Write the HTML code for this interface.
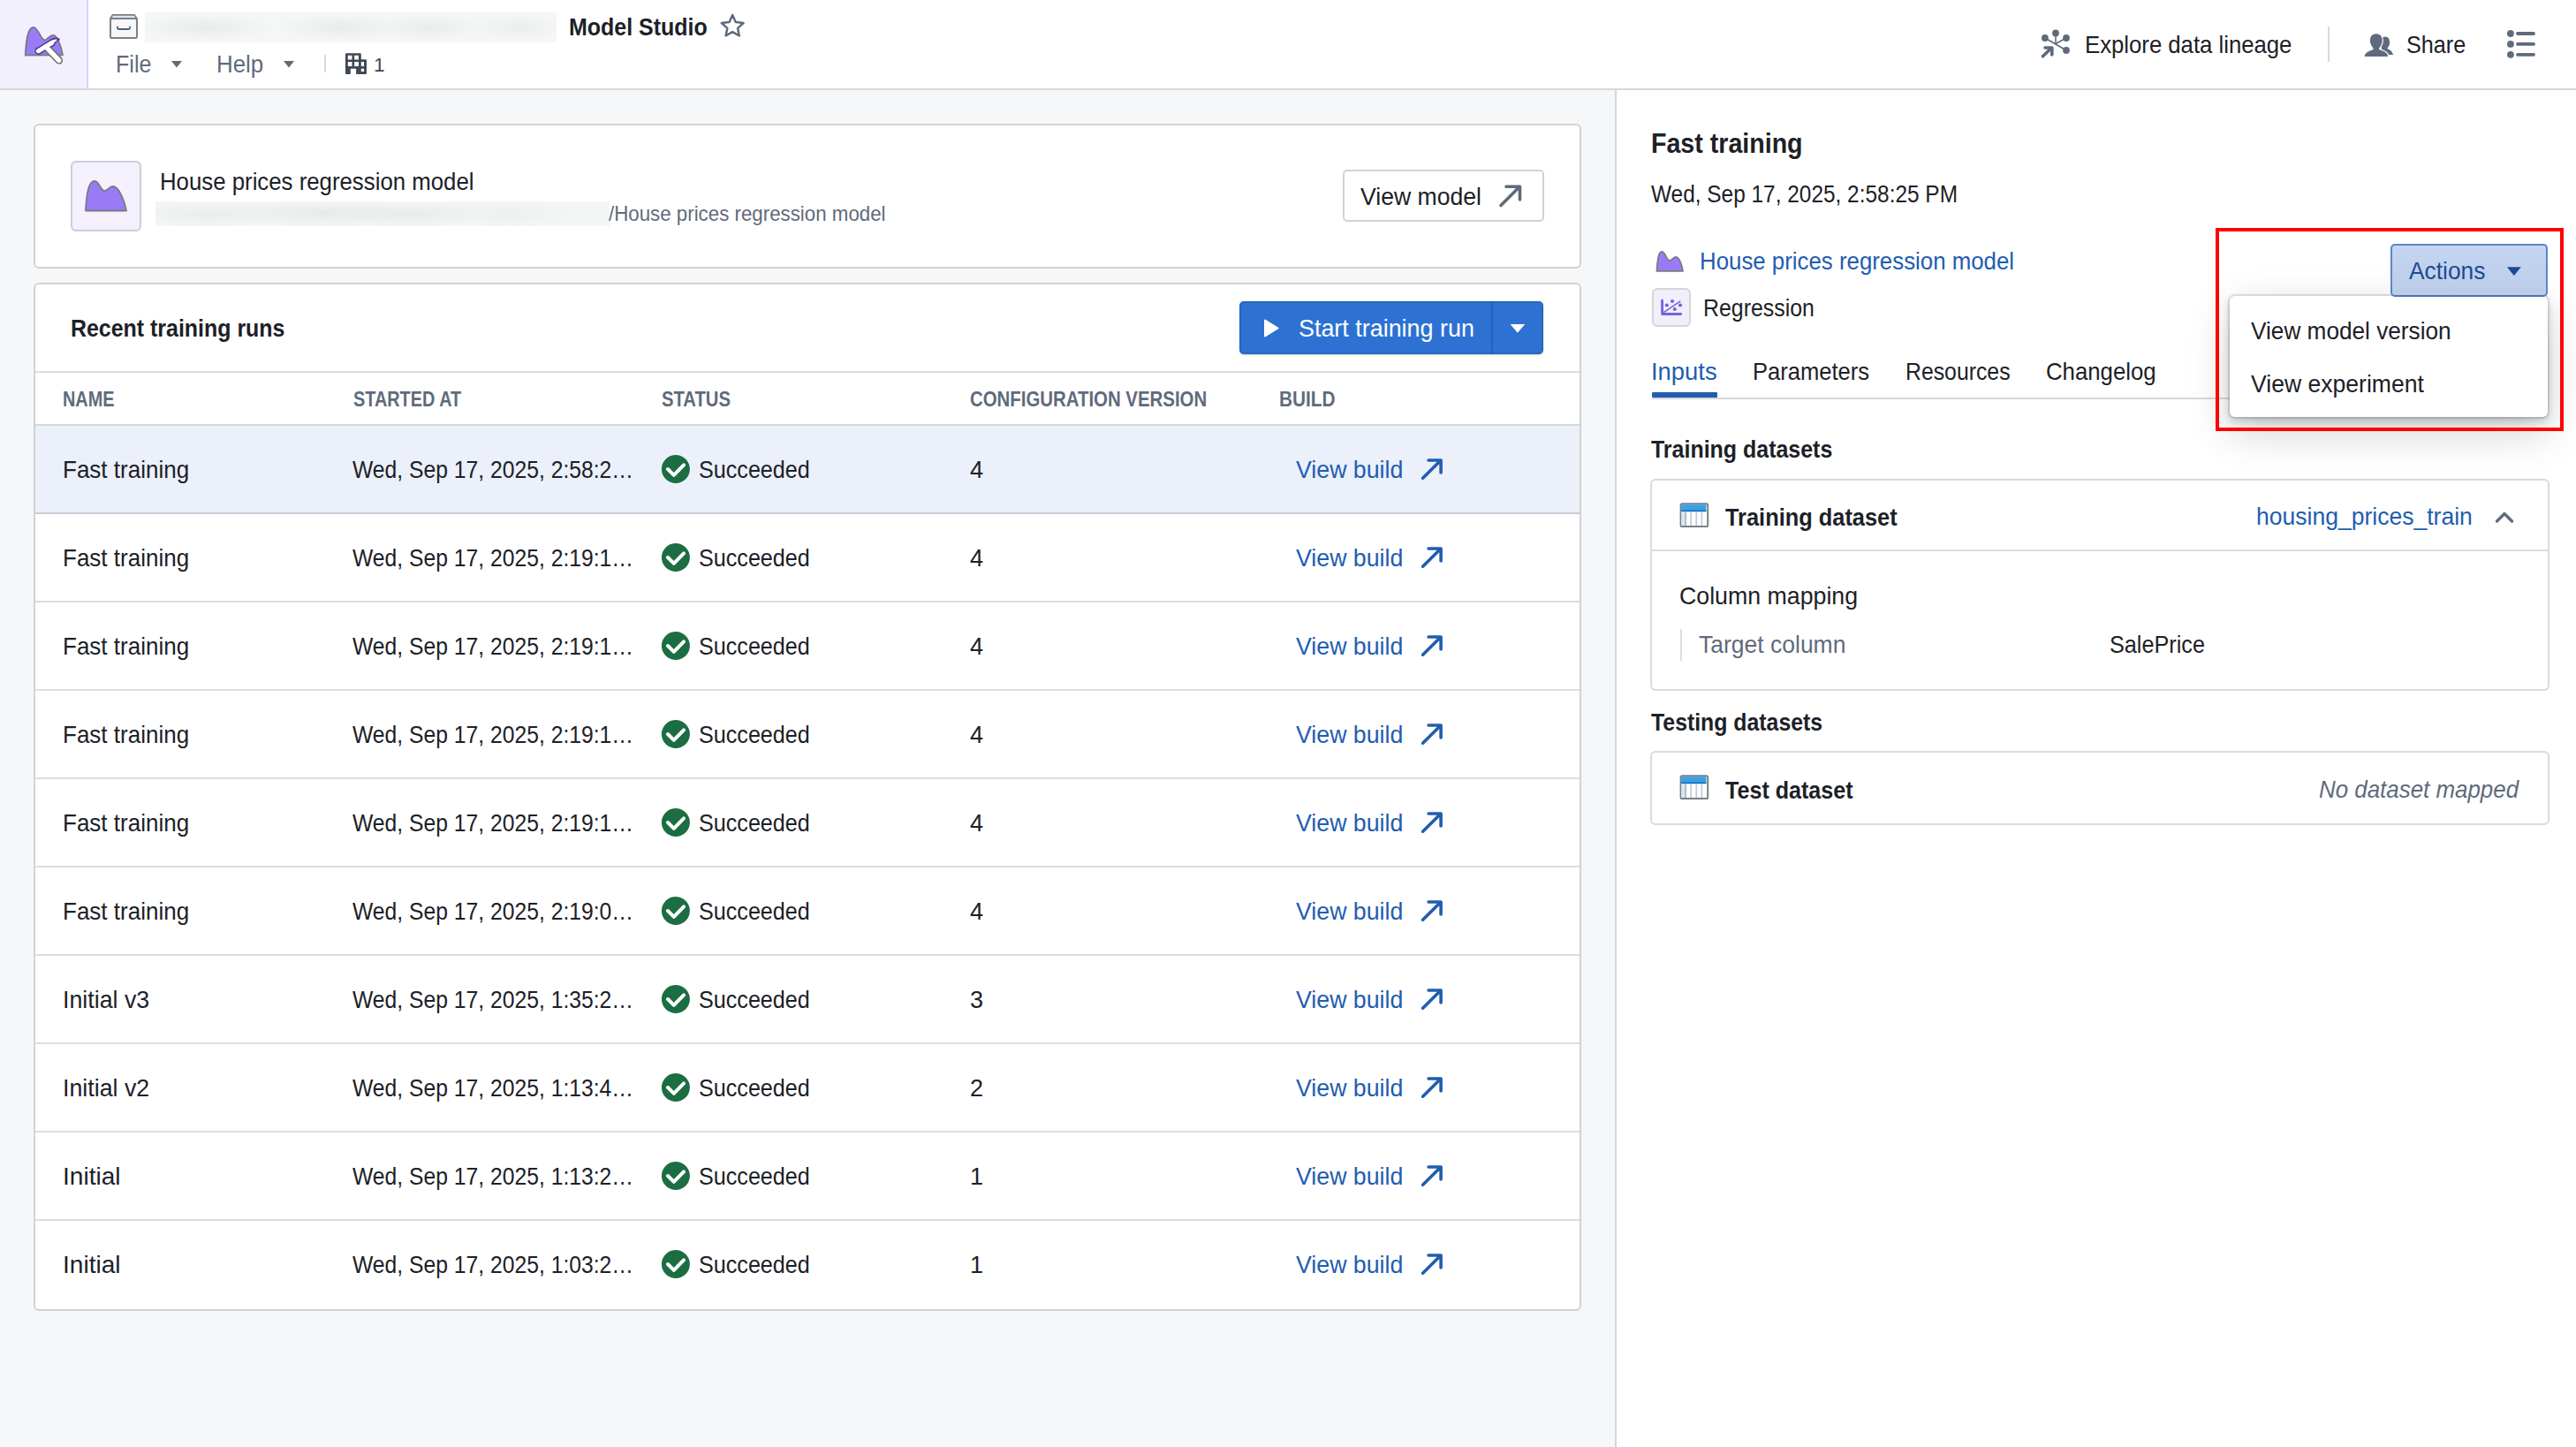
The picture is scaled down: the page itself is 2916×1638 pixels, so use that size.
<!DOCTYPE html>
<html><head><meta charset="utf-8"><title>Model Studio</title>
<style>
html,body{margin:0;padding:0;}
body{width:2916px;height:1638px;overflow:hidden;position:relative;background:#fff;font-family:"Liberation Sans",sans-serif;color:#1C2127;}
.box,.t,.ic,.card,.btn,.blur{position:absolute;box-sizing:content-box;}
.t{white-space:nowrap;line-height:1;transform-origin:0 0;}
.card{background:#fff;border:2px solid #D1D2D4;border-radius:6px;}
.btn{background:#fff;border:2px solid #D1D2D4;border-radius:5px;}
.blur{background:linear-gradient(90deg,#F3F4F5 0%,#EBECED 12%,#F1F2F3 22%,#E9EAEB 32%,#EEEFF0 45%,#E8E9EA 58%,#F0F1F2 70%,#E9EAEB 82%,#F3F4F5 100%);}
</style></head><body>
<div class="box" style="left:0;top:0;width:2916px;height:100px;background:#fff"></div>
<div class="box" style="left:0;top:100px;width:2916px;height:2px;background:#D3D8DE"></div>
<div class="box" style="left:0;top:0;width:98px;height:100px;background:#F3F0FE"></div>
<div class="box" style="left:98px;top:0;width:2px;height:100px;background:#DCD0FB"></div>
<svg class="ic" style="left:20px;top:20px" width="60" height="60" viewBox="20 20 60 60">
<path d="M28.7 62.6 C29.5 48 31 31 37.8 30.8 C43 30.8 46 45 50.3 45.3 C53.5 45.3 56 39.8 60.2 39.9 C65.5 40 70 56 71 62.3 Z" fill="#9A7BF7" stroke="#7A7A7E" stroke-width="1.8" stroke-linejoin="round"/>
<g stroke-linecap="round" stroke-linejoin="round">
<line x1="52.5" y1="53.5" x2="66.8" y2="68.3" stroke="#6F6F74" stroke-width="8.6"/>
<path d="M41.2 59.3 C40 57.5 40.5 55.8 42.5 55 L58 45.5 C61 44 64.5 43.5 66.4 44.6 C63.5 46 61.5 48 61 50.5 L57.5 52.5 L46 59.5 C44.5 61 42.5 61 41.2 59.3 Z" fill="#4B3A8C" stroke="#4B3A8C" stroke-width="2.6"/>
<line x1="52.5" y1="53.5" x2="66.8" y2="68.3" stroke="#fff" stroke-width="5.4"/>
<path d="M41.6 58.6 C40.9 57.6 41.3 56.5 42.6 56 L58 46.6 C60.5 45.2 62.5 44.9 64 45.2 C61.5 46.8 60.2 48.5 59.8 50.3 L57.2 51.8 L45.6 58.8 C44.3 59.9 42.6 59.9 41.6 58.6 Z" fill="#fff" stroke="#fff" stroke-width="1.2"/>
</g>
</svg>
<svg class="ic" style="left:118px;top:10px" width="50" height="40" viewBox="118 10 50 40">
<path d="M127.5 16.8 L152 16.8 L155 21 L125 21 Z" fill="#DCE7F2" stroke="#7C8085" stroke-width="1.8" stroke-linejoin="round"/>
<rect x="125" y="21" width="30" height="22" rx="1.8" fill="#F6F7F9" stroke="#7C8085" stroke-width="2"/>
<path d="M133 30.5 L133 31.5 Q133 33 134.5 33 L145.5 33 Q147 33 147 31.5 L147 30.5" fill="none" stroke="#4A6076" stroke-width="1.8" stroke-linecap="round"/>
</svg>
<div class="blur" style="left:164px;top:14px;width:466px;height:34px;background:radial-gradient(ellipse 75px 15px at 70px 17px,#E9EAEB,rgba(245,246,246,0)),radial-gradient(ellipse 70px 15px at 222px 17px,#E9EAEB,rgba(245,246,246,0)),radial-gradient(ellipse 60px 15px at 322px 17px,#EAEBEC,rgba(245,246,246,0)),radial-gradient(ellipse 55px 15px at 424px 17px,#ECEDEE,rgba(245,246,246,0)),#F5F6F6"></div>
<div class="t" style="left:643.7px;top:18.4px;font-size:27.03px;transform:scaleX(0.9245);color:#1C2127;font-weight:700;">Model Studio</div>
<svg class="ic" style="left:805px;top:5px" width="50" height="50" viewBox="805 5 50 50">
<path d="M829.2 17.0 L832.8 25.0 L841.6 26.0 L835.1 31.9 L836.8 40.5 L829.2 36.2 L821.6 40.5 L823.3 31.9 L816.8 26.0 L825.6 25.0 Z" fill="none" stroke="#5F6B7C" stroke-width="2.5" stroke-linejoin="round"/>
</svg>
<div class="t" style="left:130.8px;top:60.4px;font-size:27.03px;transform:scaleX(0.9283);color:#5F6B7C;">File</div>
<svg class="ic" style="left:190px;top:65px" width="20" height="15" viewBox="190 65 20 15"><path d="M194 69 L206 69 L200 76.5 Z" fill="#5F6B7C"/></svg>
<div class="t" style="left:244.5px;top:60.4px;font-size:27.03px;transform:scaleX(0.9578);color:#5F6B7C;">Help</div>
<svg class="ic" style="left:317px;top:65px" width="20" height="15" viewBox="317 65 20 15"><path d="M321 69 L333 69 L327 76.5 Z" fill="#5F6B7C"/></svg>
<div class="box" style="left:367px;top:62px;width:2px;height:20px;background:#D6D9DD"></div>
<svg class="ic" style="left:388px;top:58px" width="30" height="28" viewBox="388 58 30 28">
<path fill="#404854" fill-rule="evenodd" d="M392.2 60.2 L407.6 60.2 Q408.8 60.2 408.8 61.4 L408.8 67.3 L413.8 67.3 Q415 67.3 415 68.5 L415 82.7 Q415 83.9 413.8 83.9 L403.1 83.9 L403.1 77.7 L396.8 77.7 L396.8 83.9 L392.2 83.9 Q391 83.9 391 82.7 L391 61.4 Q391 60.2 392.2 60.2 Z
M393.8 62.7 L398.5 62.7 L398.5 67.6 L393.8 67.6 Z M401.1 62.7 L406 62.7 L406 67.6 L401.1 67.6 Z
M393.8 70.1 L398.5 70.1 L398.5 75 L393.8 75 Z M401.1 70.1 L406 70.1 L406 75 L401.1 75 Z
M408.8 70.1 L412.1 70.1 L412.1 75 L408.8 75 Z M408.8 77.8 L412.1 77.8 L412.1 81 L408.8 81 Z"/>
</svg>
<div class="t" style="left:423.0px;top:62.1px;font-size:22.67px;color:#404854;">1</div>
<svg class="ic" style="left:2300px;top:25px" width="50" height="50" viewBox="2300 25 50 50">
<g fill="#5F6B7C" stroke="#5F6B7C" stroke-linecap="round">
<circle cx="2327" cy="37.4" r="3.9" stroke="none"/><circle cx="2314.9" cy="43" r="3.9" stroke="none"/>
<circle cx="2339" cy="43" r="3.9" stroke="none"/><circle cx="2339" cy="57" r="3.9" stroke="none"/>
<path d="M2327 38 L2327 49.5 M2314.9 43 L2339 57 M2339 43 L2327 49.5" stroke-width="1.6" fill="none"/>
<path d="M2312.4 63.8 L2322.3 54.2 M2315 54 L2322.8 54 L2322.8 62" stroke-width="3.6" fill="none" stroke-linejoin="round"/>
</g></svg>
<div class="t" style="left:2359.6px;top:38.4px;font-size:27.03px;transform:scaleX(0.9517);color:#1C2127;">Explore data lineage</div>
<div class="box" style="left:2635px;top:30px;width:2px;height:40px;background:#D6D9DD"></div>
<svg class="ic" style="left:2670px;top:25px" width="50" height="50" viewBox="2670 25 50 50">
<g fill="#5F6B7C">
<path d="M2700.2 41.6 C2703.4 41.6 2705.1 44.4 2705.1 48 C2705.1 50.8 2703.9 53 2702.6 54.3 L2702.6 55.2 C2705.5 56.3 2708.2 58.3 2708.9 61.6 L2708.9 62 L2696 62 L2696 54.5 C2695 53 2694.4 50.5 2694.4 48 C2694.4 44.4 2697 41.6 2700.2 41.6 Z"/>
<path d="M2689.8 38.3 C2694.6 38.3 2696.7 42 2696.7 45.6 C2696.7 49.6 2694.9 52.6 2693.1 54.5 L2693.1 55.9 C2696.2 57 2701.2 58.6 2702.7 61.6 L2703 63.9 L2676.6 63.9 L2677.3 61.6 C2678.8 58.6 2683.6 57 2686.5 55.9 L2686.5 54.5 C2684.7 52.6 2682.9 49.6 2682.9 45.6 C2682.9 42 2685 38.3 2689.8 38.3 Z" stroke="#fff" stroke-width="2.4" paint-order="stroke"/>
</g></svg>
<div class="t" style="left:2724.0px;top:38.4px;font-size:27.03px;transform:scaleX(0.9311);color:#1C2127;">Share</div>
<svg class="ic" style="left:2830px;top:25px" width="50" height="50" viewBox="2830 25 50 50">
<g fill="#5F6B7C"><circle cx="2841.9" cy="38" r="3.9"/><circle cx="2841.9" cy="49.9" r="3.9"/><circle cx="2841.9" cy="61.8" r="3.9"/></g>
<path d="M2850 38 L2868 38 M2850 49.9 L2868 49.9 M2850 61.8 L2868 61.8" stroke="#5F6B7C" stroke-width="3.8" stroke-linecap="round"/>
</svg>
<div class="box" style="left:0;top:102px;width:1828px;height:1536px;background:#F6F7F9"></div>
<div class="box" style="left:1828px;top:102px;width:2px;height:1536px;background:#D5D7DA"></div>
<div class="box" style="left:1830px;top:102px;width:1086px;height:1536px;background:#fff"></div>
<div class="card" style="left:38px;top:140px;width:1748px;height:160px"></div>
<div class="box" style="left:80px;top:182px;width:76px;height:76px;background:#F4F0FE;border:2px solid #CFCCDA;border-radius:6px"></div>
<svg class="ic" style="left:90px;top:198px" width="60" height="48" viewBox="90 198 60 48">
<path d="M97 238.5 C97.5 226 99 205 107 205 C112.5 205 113.5 216 118.5 216 C122.5 216 123.5 211 127.5 211 C134 211 140 224 143 238.5 Z" fill="#9A7BF7" stroke="#7A7A7E" stroke-width="1.8" stroke-linejoin="round"/>
</svg>
<div class="t" style="left:180.5px;top:193.4px;font-size:27.03px;transform:scaleX(0.9546);color:#1C2127;">House prices regression model</div>
<div class="blur" style="left:176px;top:228px;width:514px;height:28px;background:radial-gradient(ellipse 90px 14px at 60px 14px,#EBECED,rgba(245,246,246,0)),radial-gradient(ellipse 110px 15px at 190px 13px,#E8E9EA,rgba(245,246,246,0)),radial-gradient(ellipse 90px 14px at 290px 14px,#EAEBEC,rgba(245,246,246,0)),radial-gradient(ellipse 80px 14px at 400px 14px,#EEEFF0,rgba(245,246,246,0)),#F4F5F5"></div>
<div class="t" style="left:688.6px;top:230.4px;font-size:24.71px;transform:scaleX(0.9026);color:#5F6B7C;">/House prices regression model</div>
<div class="btn" style="left:1520px;top:192px;width:224px;height:55px"></div>
<div class="t" style="left:1540.0px;top:210.4px;font-size:27.03px;transform:scaleX(0.9842);color:#1C2127;">View model</div>
<svg class="ic" style="left:1690px;top:203px" width="40" height="40" viewBox="1690 203 40 40">
<path d="M1699 232.5 L1720 211.5 M1705 211.2 L1720.5 211.2 L1720.5 226" fill="none" stroke="#5F6B7C" stroke-width="3.6" stroke-linecap="round" stroke-linejoin="round"/>
</svg>
<div class="card" style="left:38px;top:320px;width:1748px;height:1160px"></div>
<div class="t" style="left:80.0px;top:359.4px;font-size:27.03px;transform:scaleX(0.9229);color:#1C2127;font-weight:700;">Recent training runs</div>
<div class="box" style="left:40px;top:420px;width:1748px;height:2px;background:#DCDEE1"></div>
<div class="box" style="left:40px;top:480px;width:1748px;height:2px;background:#D3D6DA"></div>
<div class="box" style="left:1403px;top:341px;width:344px;height:60px;background:#2D72D2;border-radius:5px;box-shadow:inset 0 0 0 2px rgba(17,20,24,.12),0 1px 2px rgba(17,20,24,.2)"></div>
<div class="box" style="left:1688px;top:341px;width:2px;height:60px;background:#215DB0;opacity:.7"></div>
<svg class="ic" style="left:1425px;top:358px" width="30" height="28" viewBox="1425 358 30 28"><path d="M1432 362.5 L1446.5 371.5 L1432 380.5 Z" fill="#fff" stroke="#fff" stroke-width="2" stroke-linejoin="round"/></svg>
<div class="t" style="left:1470.0px;top:359.4px;font-size:27.03px;transform:scaleX(0.9956);color:#fff;">Start training run</div>
<svg class="ic" style="left:1700px;top:360px" width="36" height="24" viewBox="1700 360 36 24"><path d="M1709.6 367 L1726.2 367 L1717.9 376.8 Z" fill="#fff"/></svg>
<div class="t" style="left:70.6px;top:440.7px;font-size:23.11px;transform:scaleX(0.8595);color:#5F6B7C;font-weight:700;">NAME</div>
<div class="t" style="left:399.6px;top:440.7px;font-size:23.11px;transform:scaleX(0.8598);color:#5F6B7C;font-weight:700;">STARTED AT</div>
<div class="t" style="left:748.8px;top:440.7px;font-size:23.11px;transform:scaleX(0.8755);color:#5F6B7C;font-weight:700;">STATUS</div>
<div class="t" style="left:1098.0px;top:440.7px;font-size:23.11px;transform:scaleX(0.8825);color:#5F6B7C;font-weight:700;">CONFIGURATION VERSION</div>
<div class="t" style="left:1447.7px;top:440.7px;font-size:23.11px;transform:scaleX(0.8994);color:#5F6B7C;font-weight:700;">BUILD</div>
<div class="box" style="left:40px;top:482px;width:1748px;height:98px;background:#EBF0FA"></div>
<div class="box" style="left:40px;top:580px;width:1748px;height:2px;background:#C6CCD7"></div>
<div class="t" style="left:70.8px;top:519.4px;font-size:27.03px;transform:scaleX(0.9630);color:#1C2127;">Fast training</div>
<div class="t" style="left:399.0px;top:519.4px;font-size:27.03px;transform:scaleX(0.9140);color:#1C2127;">Wed, Sep 17, 2025, 2:58:2…</div>
<svg class="ic" style="left:745px;top:510.9px" width="40" height="40" viewBox="745 510.9 40 40">
<circle cx="764.9" cy="530.9" r="16" fill="#1C6E42"/>
<path d="M756 530.9 L762.8 537.7 L774 526.3" fill="none" stroke="#fff" stroke-width="4" stroke-linecap="round" stroke-linejoin="round"/>
</svg>
<div class="t" style="left:791.0px;top:519.4px;font-size:27.03px;transform:scaleX(0.9306);color:#1C2127;">Succeeded</div>
<div class="t" style="left:1098.0px;top:519.4px;font-size:27.03px;color:#1C2127;">4</div>
<div class="t" style="left:1466.8px;top:519.4px;font-size:27.03px;transform:scaleX(0.9893);color:#215DB0;">View build</div>
<svg class="ic" style="left:1600px;top:509.9px" width="45" height="42" viewBox="1600 509.9 45 42">
<path d="M1610.6 541.1 L1630 521.9 M1617.1 520.9 L1631.1 520.9 L1631.1 534.9" fill="none" stroke="#215DB0" stroke-width="3.6" stroke-linecap="round" stroke-linejoin="round"/>
</svg>
<div class="box" style="left:40px;top:680px;width:1748px;height:2px;background:#DCDEE1"></div>
<div class="t" style="left:70.8px;top:619.4px;font-size:27.03px;transform:scaleX(0.9630);color:#1C2127;">Fast training</div>
<div class="t" style="left:399.0px;top:619.4px;font-size:27.03px;transform:scaleX(0.9140);color:#1C2127;">Wed, Sep 17, 2025, 2:19:1…</div>
<svg class="ic" style="left:745px;top:610.9px" width="40" height="40" viewBox="745 610.9 40 40">
<circle cx="764.9" cy="630.9" r="16" fill="#1C6E42"/>
<path d="M756 630.9 L762.8 637.7 L774 626.3" fill="none" stroke="#fff" stroke-width="4" stroke-linecap="round" stroke-linejoin="round"/>
</svg>
<div class="t" style="left:791.0px;top:619.4px;font-size:27.03px;transform:scaleX(0.9306);color:#1C2127;">Succeeded</div>
<div class="t" style="left:1098.0px;top:619.4px;font-size:27.03px;color:#1C2127;">4</div>
<div class="t" style="left:1466.8px;top:619.4px;font-size:27.03px;transform:scaleX(0.9893);color:#215DB0;">View build</div>
<svg class="ic" style="left:1600px;top:609.9px" width="45" height="42" viewBox="1600 609.9 45 42">
<path d="M1610.6 641.1 L1630 621.9 M1617.1 620.9 L1631.1 620.9 L1631.1 634.9" fill="none" stroke="#215DB0" stroke-width="3.6" stroke-linecap="round" stroke-linejoin="round"/>
</svg>
<div class="box" style="left:40px;top:780px;width:1748px;height:2px;background:#DCDEE1"></div>
<div class="t" style="left:70.8px;top:719.4px;font-size:27.03px;transform:scaleX(0.9630);color:#1C2127;">Fast training</div>
<div class="t" style="left:399.0px;top:719.4px;font-size:27.03px;transform:scaleX(0.9140);color:#1C2127;">Wed, Sep 17, 2025, 2:19:1…</div>
<svg class="ic" style="left:745px;top:710.9px" width="40" height="40" viewBox="745 710.9 40 40">
<circle cx="764.9" cy="730.9" r="16" fill="#1C6E42"/>
<path d="M756 730.9 L762.8 737.7 L774 726.3" fill="none" stroke="#fff" stroke-width="4" stroke-linecap="round" stroke-linejoin="round"/>
</svg>
<div class="t" style="left:791.0px;top:719.4px;font-size:27.03px;transform:scaleX(0.9306);color:#1C2127;">Succeeded</div>
<div class="t" style="left:1098.0px;top:719.4px;font-size:27.03px;color:#1C2127;">4</div>
<div class="t" style="left:1466.8px;top:719.4px;font-size:27.03px;transform:scaleX(0.9893);color:#215DB0;">View build</div>
<svg class="ic" style="left:1600px;top:709.9px" width="45" height="42" viewBox="1600 709.9 45 42">
<path d="M1610.6 741.1 L1630 721.9 M1617.1 720.9 L1631.1 720.9 L1631.1 734.9" fill="none" stroke="#215DB0" stroke-width="3.6" stroke-linecap="round" stroke-linejoin="round"/>
</svg>
<div class="box" style="left:40px;top:880px;width:1748px;height:2px;background:#DCDEE1"></div>
<div class="t" style="left:70.8px;top:819.4px;font-size:27.03px;transform:scaleX(0.9630);color:#1C2127;">Fast training</div>
<div class="t" style="left:399.0px;top:819.4px;font-size:27.03px;transform:scaleX(0.9140);color:#1C2127;">Wed, Sep 17, 2025, 2:19:1…</div>
<svg class="ic" style="left:745px;top:810.9px" width="40" height="40" viewBox="745 810.9 40 40">
<circle cx="764.9" cy="830.9" r="16" fill="#1C6E42"/>
<path d="M756 830.9 L762.8 837.7 L774 826.3" fill="none" stroke="#fff" stroke-width="4" stroke-linecap="round" stroke-linejoin="round"/>
</svg>
<div class="t" style="left:791.0px;top:819.4px;font-size:27.03px;transform:scaleX(0.9306);color:#1C2127;">Succeeded</div>
<div class="t" style="left:1098.0px;top:819.4px;font-size:27.03px;color:#1C2127;">4</div>
<div class="t" style="left:1466.8px;top:819.4px;font-size:27.03px;transform:scaleX(0.9893);color:#215DB0;">View build</div>
<svg class="ic" style="left:1600px;top:809.9px" width="45" height="42" viewBox="1600 809.9 45 42">
<path d="M1610.6 841.1 L1630 821.9 M1617.1 820.9 L1631.1 820.9 L1631.1 834.9" fill="none" stroke="#215DB0" stroke-width="3.6" stroke-linecap="round" stroke-linejoin="round"/>
</svg>
<div class="box" style="left:40px;top:980px;width:1748px;height:2px;background:#DCDEE1"></div>
<div class="t" style="left:70.8px;top:919.4px;font-size:27.03px;transform:scaleX(0.9630);color:#1C2127;">Fast training</div>
<div class="t" style="left:399.0px;top:919.4px;font-size:27.03px;transform:scaleX(0.9140);color:#1C2127;">Wed, Sep 17, 2025, 2:19:1…</div>
<svg class="ic" style="left:745px;top:910.9px" width="40" height="40" viewBox="745 910.9 40 40">
<circle cx="764.9" cy="930.9" r="16" fill="#1C6E42"/>
<path d="M756 930.9 L762.8 937.7 L774 926.3" fill="none" stroke="#fff" stroke-width="4" stroke-linecap="round" stroke-linejoin="round"/>
</svg>
<div class="t" style="left:791.0px;top:919.4px;font-size:27.03px;transform:scaleX(0.9306);color:#1C2127;">Succeeded</div>
<div class="t" style="left:1098.0px;top:919.4px;font-size:27.03px;color:#1C2127;">4</div>
<div class="t" style="left:1466.8px;top:919.4px;font-size:27.03px;transform:scaleX(0.9893);color:#215DB0;">View build</div>
<svg class="ic" style="left:1600px;top:909.9px" width="45" height="42" viewBox="1600 909.9 45 42">
<path d="M1610.6 941.1 L1630 921.9 M1617.1 920.9 L1631.1 920.9 L1631.1 934.9" fill="none" stroke="#215DB0" stroke-width="3.6" stroke-linecap="round" stroke-linejoin="round"/>
</svg>
<div class="box" style="left:40px;top:1080px;width:1748px;height:2px;background:#DCDEE1"></div>
<div class="t" style="left:70.8px;top:1019.4px;font-size:27.03px;transform:scaleX(0.9630);color:#1C2127;">Fast training</div>
<div class="t" style="left:399.0px;top:1019.4px;font-size:27.03px;transform:scaleX(0.9140);color:#1C2127;">Wed, Sep 17, 2025, 2:19:0…</div>
<svg class="ic" style="left:745px;top:1010.9px" width="40" height="40" viewBox="745 1010.9 40 40">
<circle cx="764.9" cy="1030.9" r="16" fill="#1C6E42"/>
<path d="M756 1030.9 L762.8 1037.7 L774 1026.3" fill="none" stroke="#fff" stroke-width="4" stroke-linecap="round" stroke-linejoin="round"/>
</svg>
<div class="t" style="left:791.0px;top:1019.4px;font-size:27.03px;transform:scaleX(0.9306);color:#1C2127;">Succeeded</div>
<div class="t" style="left:1098.0px;top:1019.4px;font-size:27.03px;color:#1C2127;">4</div>
<div class="t" style="left:1466.8px;top:1019.4px;font-size:27.03px;transform:scaleX(0.9893);color:#215DB0;">View build</div>
<svg class="ic" style="left:1600px;top:1009.9px" width="45" height="42" viewBox="1600 1009.9 45 42">
<path d="M1610.6 1041.1 L1630 1021.9 M1617.1 1020.9 L1631.1 1020.9 L1631.1 1034.9" fill="none" stroke="#215DB0" stroke-width="3.6" stroke-linecap="round" stroke-linejoin="round"/>
</svg>
<div class="box" style="left:40px;top:1180px;width:1748px;height:2px;background:#DCDEE1"></div>
<div class="t" style="left:70.8px;top:1119.4px;font-size:27.03px;transform:scaleX(0.9909);color:#1C2127;">Initial v3</div>
<div class="t" style="left:399.0px;top:1119.4px;font-size:27.03px;transform:scaleX(0.9140);color:#1C2127;">Wed, Sep 17, 2025, 1:35:2…</div>
<svg class="ic" style="left:745px;top:1110.9px" width="40" height="40" viewBox="745 1110.9 40 40">
<circle cx="764.9" cy="1130.9" r="16" fill="#1C6E42"/>
<path d="M756 1130.9 L762.8 1137.7 L774 1126.3" fill="none" stroke="#fff" stroke-width="4" stroke-linecap="round" stroke-linejoin="round"/>
</svg>
<div class="t" style="left:791.0px;top:1119.4px;font-size:27.03px;transform:scaleX(0.9306);color:#1C2127;">Succeeded</div>
<div class="t" style="left:1098.0px;top:1119.4px;font-size:27.03px;color:#1C2127;">3</div>
<div class="t" style="left:1466.8px;top:1119.4px;font-size:27.03px;transform:scaleX(0.9893);color:#215DB0;">View build</div>
<svg class="ic" style="left:1600px;top:1109.9px" width="45" height="42" viewBox="1600 1109.9 45 42">
<path d="M1610.6 1141.1 L1630 1121.9 M1617.1 1120.9 L1631.1 1120.9 L1631.1 1134.9" fill="none" stroke="#215DB0" stroke-width="3.6" stroke-linecap="round" stroke-linejoin="round"/>
</svg>
<div class="box" style="left:40px;top:1280px;width:1748px;height:2px;background:#DCDEE1"></div>
<div class="t" style="left:70.8px;top:1219.4px;font-size:27.03px;transform:scaleX(0.9909);color:#1C2127;">Initial v2</div>
<div class="t" style="left:399.0px;top:1219.4px;font-size:27.03px;transform:scaleX(0.9140);color:#1C2127;">Wed, Sep 17, 2025, 1:13:4…</div>
<svg class="ic" style="left:745px;top:1210.9px" width="40" height="40" viewBox="745 1210.9 40 40">
<circle cx="764.9" cy="1230.9" r="16" fill="#1C6E42"/>
<path d="M756 1230.9 L762.8 1237.7 L774 1226.3" fill="none" stroke="#fff" stroke-width="4" stroke-linecap="round" stroke-linejoin="round"/>
</svg>
<div class="t" style="left:791.0px;top:1219.4px;font-size:27.03px;transform:scaleX(0.9306);color:#1C2127;">Succeeded</div>
<div class="t" style="left:1098.0px;top:1219.4px;font-size:27.03px;color:#1C2127;">2</div>
<div class="t" style="left:1466.8px;top:1219.4px;font-size:27.03px;transform:scaleX(0.9893);color:#215DB0;">View build</div>
<svg class="ic" style="left:1600px;top:1209.9px" width="45" height="42" viewBox="1600 1209.9 45 42">
<path d="M1610.6 1241.1 L1630 1221.9 M1617.1 1220.9 L1631.1 1220.9 L1631.1 1234.9" fill="none" stroke="#215DB0" stroke-width="3.6" stroke-linecap="round" stroke-linejoin="round"/>
</svg>
<div class="box" style="left:40px;top:1380px;width:1748px;height:2px;background:#DCDEE1"></div>
<div class="t" style="left:70.8px;top:1319.4px;font-size:27.03px;transform:scaleX(1.0394);color:#1C2127;">Initial</div>
<div class="t" style="left:399.0px;top:1319.4px;font-size:27.03px;transform:scaleX(0.9140);color:#1C2127;">Wed, Sep 17, 2025, 1:13:2…</div>
<svg class="ic" style="left:745px;top:1310.9px" width="40" height="40" viewBox="745 1310.9 40 40">
<circle cx="764.9" cy="1330.9" r="16" fill="#1C6E42"/>
<path d="M756 1330.9 L762.8 1337.7 L774 1326.3" fill="none" stroke="#fff" stroke-width="4" stroke-linecap="round" stroke-linejoin="round"/>
</svg>
<div class="t" style="left:791.0px;top:1319.4px;font-size:27.03px;transform:scaleX(0.9306);color:#1C2127;">Succeeded</div>
<div class="t" style="left:1098.0px;top:1319.4px;font-size:27.03px;color:#1C2127;">1</div>
<div class="t" style="left:1466.8px;top:1319.4px;font-size:27.03px;transform:scaleX(0.9893);color:#215DB0;">View build</div>
<svg class="ic" style="left:1600px;top:1309.9px" width="45" height="42" viewBox="1600 1309.9 45 42">
<path d="M1610.6 1341.1 L1630 1321.9 M1617.1 1320.9 L1631.1 1320.9 L1631.1 1334.9" fill="none" stroke="#215DB0" stroke-width="3.6" stroke-linecap="round" stroke-linejoin="round"/>
</svg>
<div class="t" style="left:70.8px;top:1419.4px;font-size:27.03px;transform:scaleX(1.0394);color:#1C2127;">Initial</div>
<div class="t" style="left:399.0px;top:1419.4px;font-size:27.03px;transform:scaleX(0.9140);color:#1C2127;">Wed, Sep 17, 2025, 1:03:2…</div>
<svg class="ic" style="left:745px;top:1410.9px" width="40" height="40" viewBox="745 1410.9 40 40">
<circle cx="764.9" cy="1430.9" r="16" fill="#1C6E42"/>
<path d="M756 1430.9 L762.8 1437.7 L774 1426.3" fill="none" stroke="#fff" stroke-width="4" stroke-linecap="round" stroke-linejoin="round"/>
</svg>
<div class="t" style="left:791.0px;top:1419.4px;font-size:27.03px;transform:scaleX(0.9306);color:#1C2127;">Succeeded</div>
<div class="t" style="left:1098.0px;top:1419.4px;font-size:27.03px;color:#1C2127;">1</div>
<div class="t" style="left:1466.8px;top:1419.4px;font-size:27.03px;transform:scaleX(0.9893);color:#215DB0;">View build</div>
<svg class="ic" style="left:1600px;top:1409.9px" width="45" height="42" viewBox="1600 1409.9 45 42">
<path d="M1610.6 1441.1 L1630 1421.9 M1617.1 1420.9 L1631.1 1420.9 L1631.1 1434.9" fill="none" stroke="#215DB0" stroke-width="3.6" stroke-linecap="round" stroke-linejoin="round"/>
</svg>
<div class="t" style="left:1869.0px;top:146.7px;font-size:31.40px;transform:scaleX(0.9108);color:#1C2127;font-weight:700;">Fast training</div>
<div class="t" style="left:1869.0px;top:207.4px;font-size:27.03px;transform:scaleX(0.9036);color:#1C2127;">Wed, Sep 17, 2025, 2:58:25 PM</div>
<svg class="ic" style="left:1868px;top:278px" width="44" height="36" viewBox="1868 278 44 36">
<path d="M1875.5 306.8 C1876 300 1876.5 285 1881.2 285 C1885 285 1886.5 295 1890.2 295 C1892.5 295 1894 290.8 1896.8 290.8 C1900.5 290.8 1903.5 299 1905 306.8 Z" fill="#9A7BF7" stroke="#7A7A7E" stroke-width="1.8" stroke-linejoin="round"/>
</svg>
<div class="t" style="left:1923.8px;top:283.4px;font-size:27.03px;transform:scaleX(0.9562);color:#215DB0;">House prices regression model</div>
<div class="box" style="left:1870px;top:326px;width:40px;height:40px;background:#F1EFFC;border:2px solid #D6D6D8;border-radius:6px"></div>
<svg class="ic" style="left:1875px;top:333px" width="34" height="30" viewBox="1875 333 34 30">
<g fill="#7961DB"><circle cx="1886.8" cy="345.5" r="2.1"/><circle cx="1893" cy="341" r="2.1"/><circle cx="1895.8" cy="350" r="2.1"/><circle cx="1902" cy="345.5" r="2.1"/></g>
<path d="M1881.6 340.2 L1881.6 355.5 L1902.7 355.5" fill="none" stroke="#7961DB" stroke-width="2.8" stroke-linecap="round" stroke-linejoin="round"/>
<path d="M1883.3 353.6 L1902.3 340.8" stroke="#7961DB" stroke-width="1.6"/>
</svg>
<div class="t" style="left:1927.8px;top:336.4px;font-size:27.03px;transform:scaleX(0.9212);color:#1C2127;">Regression</div>
<div class="t" style="left:1869.0px;top:408.4px;font-size:27.03px;transform:scaleX(1.0142);color:#215DB0;">Inputs</div>
<div class="t" style="left:1984.0px;top:408.4px;font-size:27.03px;transform:scaleX(0.9460);color:#1C2127;">Parameters</div>
<div class="t" style="left:2157.0px;top:408.4px;font-size:27.03px;transform:scaleX(0.9179);color:#1C2127;">Resources</div>
<div class="t" style="left:2315.8px;top:408.4px;font-size:27.03px;transform:scaleX(0.9539);color:#1C2127;">Changelog</div>
<div class="box" style="left:1870px;top:450px;width:1014px;height:2px;background:#D6D7D9"></div>
<div class="box" style="left:1870px;top:444px;width:74px;height:6px;background:#215DB0;border-radius:1px"></div>
<div class="t" style="left:1869.2px;top:496.4px;font-size:27.03px;transform:scaleX(0.9239);color:#1C2127;font-weight:700;">Training datasets</div>
<div class="card" style="left:1868px;top:542px;width:1014px;height:236px;border-color:#DADBDC"></div>
<div class="box" style="left:1870px;top:622px;width:1014px;height:2px;background:#DCDDDE"></div>
<svg class="ic" style="left:1901px;top:568.5px" width="34" height="30" viewBox="0 0 34 30">
<rect x="1.6" y="1.2" width="30.6" height="25.8" rx="1.6" fill="#fff" stroke="#7C7F84" stroke-width="2"/>
<rect x="2.2" y="2.2" width="28.2" height="7.6" fill="#3B9FE8"/>
<rect x="2.2" y="8.6" width="28.2" height="1.6" fill="#0B6FBD"/>
<rect x="2.2" y="10.2" width="5" height="15.8" fill="#D6E7F5"/>
<rect x="6.2" y="10.2" width="1.8" height="15.8" fill="#A8BCCF"/><rect x="12.3" y="10.2" width="1.8" height="15.8" fill="#C0CCD9"/>
<rect x="18.4" y="10.2" width="1.8" height="15.8" fill="#C0CCD9"/><rect x="24.5" y="10.2" width="1.8" height="15.8" fill="#C0CCD9"/>
</svg>
<div class="t" style="left:1953.0px;top:571.3px;font-size:28.34px;transform:scaleX(0.8962);color:#1C2127;font-weight:700;">Training dataset</div>
<div class="t" style="left:2553.8px;top:572.4px;font-size:27.03px;transform:scaleX(0.9820);color:#215DB0;">housing_prices_train</div>
<svg class="ic" style="left:2820px;top:570px" width="30" height="28" viewBox="2820 570 30 28"><path d="M2826.5 590 L2835 581.5 L2843.5 590" fill="none" stroke="#5F6B7C" stroke-width="3.4" stroke-linecap="round" stroke-linejoin="round"/></svg>
<div class="t" style="left:1901.0px;top:662.4px;font-size:27.03px;transform:scaleX(0.9895);color:#1C2127;">Column mapping</div>
<div class="box" style="left:1902px;top:712px;width:2px;height:36px;background:#DCDEE1"></div>
<div class="t" style="left:1923.0px;top:717.4px;font-size:27.03px;transform:scaleX(0.9809);color:#5F6B7C;">Target column</div>
<div class="t" style="left:2387.8px;top:717.4px;font-size:27.03px;transform:scaleX(0.9335);color:#1C2127;">SalePrice</div>
<div class="t" style="left:1869.0px;top:805.4px;font-size:27.03px;transform:scaleX(0.9193);color:#1C2127;font-weight:700;">Testing datasets</div>
<div class="card" style="left:1868px;top:850px;width:1014px;height:80px;border-color:#DADBDC"></div>
<svg class="ic" style="left:1901px;top:876.5px" width="34" height="30" viewBox="0 0 34 30">
<rect x="1.6" y="1.2" width="30.6" height="25.8" rx="1.6" fill="#fff" stroke="#7C7F84" stroke-width="2"/>
<rect x="2.2" y="2.2" width="28.2" height="7.6" fill="#3B9FE8"/>
<rect x="2.2" y="8.6" width="28.2" height="1.6" fill="#0B6FBD"/>
<rect x="2.2" y="10.2" width="5" height="15.8" fill="#D6E7F5"/>
<rect x="6.2" y="10.2" width="1.8" height="15.8" fill="#A8BCCF"/><rect x="12.3" y="10.2" width="1.8" height="15.8" fill="#C0CCD9"/>
<rect x="18.4" y="10.2" width="1.8" height="15.8" fill="#C0CCD9"/><rect x="24.5" y="10.2" width="1.8" height="15.8" fill="#C0CCD9"/>
</svg>
<div class="t" style="left:1953.0px;top:880.3px;font-size:28.34px;transform:scaleX(0.8858);color:#1C2127;font-weight:700;">Test dataset</div>
<div class="t" style="left:2625.0px;top:881.4px;font-size:27.03px;transform:scaleX(0.9588);color:#5F6B7C;font-style:italic;">No dataset mapped</div>
<div class="box" style="left:2524px;top:335px;width:360px;height:137px;background:#fff;border-radius:6px;box-shadow:0 0 0 2px rgba(17,20,24,.1),0 4px 8px rgba(17,20,24,.2),0 16px 48px rgba(17,20,24,.2)"></div>
<div class="box" style="left:2706px;top:276px;width:174px;height:56px;background:linear-gradient(#C4D6F1,#BACCE8);border:2px solid #5B86C7;border-bottom-color:#4E74B3;border-radius:5px"></div>
<div class="t" style="left:2727.0px;top:294.4px;font-size:27.03px;transform:scaleX(0.9745);color:#1C4A94;">Actions</div>
<svg class="ic" style="left:2832px;top:296px" width="26" height="22" viewBox="2832 296 26 22"><path d="M2837.9 302.2 L2853.8 302.2 L2845.85 312 Z" fill="#1C4A94"/></svg>
<div class="t" style="left:2548.2px;top:362.4px;font-size:27.03px;transform:scaleX(0.9695);color:#1C2127;">View model version</div>
<div class="t" style="left:2548.2px;top:422.4px;font-size:27.03px;transform:scaleX(0.9832);color:#1C2127;">View experiment</div>
<div class="box" style="left:2508px;top:258px;width:386px;height:222px;border:4px solid #FF0000"></div>
</body></html>
